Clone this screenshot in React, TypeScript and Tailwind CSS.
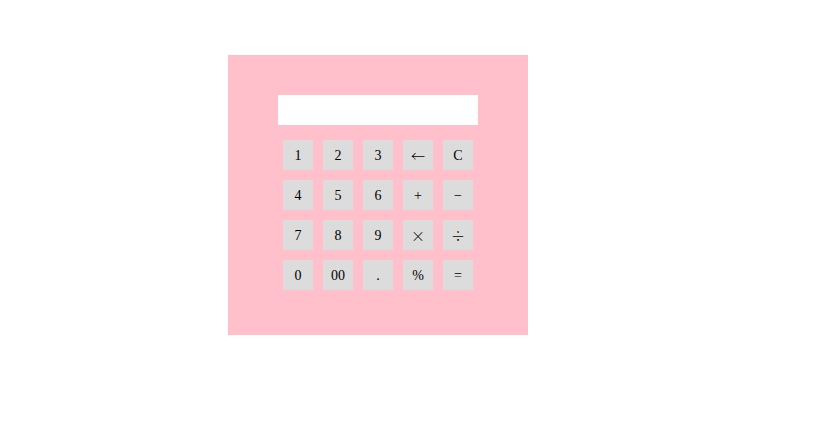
const KEYS = [
  "1", "2", "3", "←", "C",
  "4", "5", "6", "+", "−",
  "7", "8", "9", "×", "÷",
  "0", "00", ".", "%", "=",
];

// glyphs the reference draws full width
const WIDE = ["←", "×", "÷"];

export default function App() {
  return (
    <div className="min-h-[425px] w-full bg-white pt-[55px] pl-[228px]">
      <div className="flex h-[280px] w-[300px] flex-col items-center bg-[#ffc0cb] pt-[40px]">
        <div className="h-[30px] w-[200px] bg-white" />
        <div className="mt-[15px] grid grid-cols-5 gap-[10px]">
          {KEYS.map((k) => (
            <button
              key={k}
              className={
                WIDE.includes(k)
                  ? "flex h-[30px] w-[30px] items-center justify-center bg-[#dcdcdc] text-[14px] font-light text-black [font-family:'Noto_Sans_CJK_SC',sans-serif]"
                  : "flex h-[30px] w-[30px] items-center justify-center bg-[#dcdcdc] text-[14px] text-black [font-family:'Liberation_Serif',serif]"
              }
            >
              {k}
            </button>
          ))}
        </div>
      </div>
    </div>
  );
}
